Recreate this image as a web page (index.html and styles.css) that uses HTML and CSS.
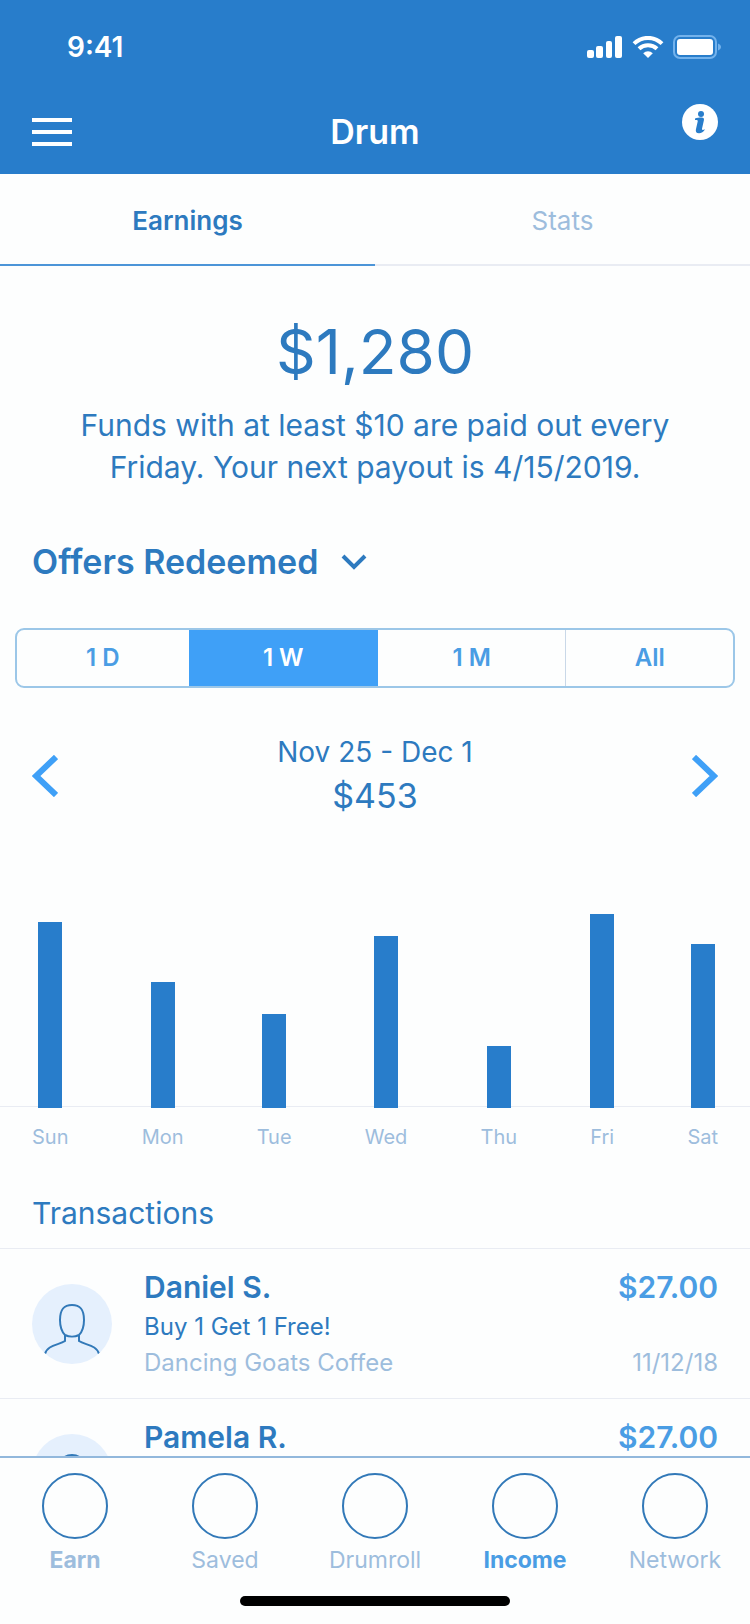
FILE: index.html
```html
<!DOCTYPE html>
<html lang="en">
<head>
<meta charset="utf-8">
<meta name="viewport" content="width=device-width, initial-scale=1">
<title>Drum</title>
<link rel="stylesheet" href="styles.css">
</head>
<body>
<svg class="sprite" aria-hidden="true">
  <symbol id="person" viewBox="0 0 80 80">
    <path d="M33 51C29 47 28 42 28 36C28 25 32 21 40 21C48 21 52 25 52 36C52 42 51 47 47 51C43 53 37 53 33 51ZM33 51V57C27 61 15 61 13 70M47 51V57C53 61 65 61 67 70" fill="none" stroke="currentColor" stroke-width="2"/>
  </symbol>
</svg>
<div class="app">
  <header class="header">
    <div class="status">
      <span class="status-time">9:41</span>
      <div class="status-icons">
        <svg width="36" height="22" viewBox="0 0 36 22" fill="currentColor" aria-hidden="true">
          <rect x="0" y="14" width="7" height="8" rx="2"/>
          <rect x="9" y="10" width="7" height="12" rx="2"/>
          <rect x="19" y="5" width="6" height="17" rx="2"/>
          <rect x="28" y="0" width="7" height="22" rx="2"/>
        </svg>
        <svg width="32" height="22" viewBox="0 0 32 22" aria-hidden="true">
          <path d="M2 7.6A20 20 0 0 1 30 7.6M7 12.8A13 13 0 0 1 25 12.8" fill="none" stroke="currentColor" stroke-width="4"/>
          <path d="M16 22L11.200 17.200A7 7 0 0 1 20.800 17.200Z" fill="currentColor"/>
        </svg>
        <svg width="49" height="24" viewBox="0 0 49 24" aria-hidden="true">
          <rect x="1" y="1" width="42" height="22" rx="6" fill="none" stroke="#73b2ec" stroke-width="2"/>
          <rect x="4" y="4" width="36" height="16" rx="3" fill="currentColor"/>
          <path d="M45 8.500C49 10 49 14 45 15.500Z" fill="#73b2ec"/>
        </svg>
      </div>
    </div>
    <div class="titlebar">
      <button class="icon-button" type="button" aria-label="Menu">
        <svg width="40" height="28" viewBox="0 0 40 28" fill="currentColor" aria-hidden="true"><path d="M0 0H40V4H0ZM0 12H40V16H0ZM0 24H40V28H0Z"/></svg>
      </button>
      <h1 class="title">Drum</h1>
      <button class="icon-button info" type="button" aria-label="Information">
        <svg width="36" height="36" viewBox="0 0 36 36" aria-hidden="true">
          <circle cx="18" cy="18" r="18" fill="currentColor"/>
          <circle cx="19" cy="10" r="3" fill="#287dcb"/>
          <path d="M13 14.500C15 13.800 17 13.500 19.500 13.500C21.800 13.500 22.200 14.600 21.900 16.200L20 24.800C19.800 26.200 20.800 26.200 23 25.200C21.800 28 19.200 29.200 17 29.200C14.200 29.200 13.500 27.600 13.900 25.500L15.700 17.600C15.900 16.300 15.300 15.900 13 16Z" fill="#287dcb"/>
        </svg>
      </button>
    </div>
  </header>

  <nav class="tabs" aria-label="Views">
    <a class="tab tab-active" href="#earnings" aria-current="page">Earnings</a>
    <a class="tab" href="#stats">Stats</a>
  </nav>

  <main class="content" id="earnings">
    <section class="summary">
      <p class="balance">$1,280</p>
      <p class="payout">Funds with at least $10 are paid out every Friday. Your next payout is 4/15/2019.</p>
    </section>

    <div class="metric">
      <select class="metric-select" aria-label="Metric"><option>Offers Redeemed</option></select>
      <svg class="metric-arrow" width="26" height="16" viewBox="0 0 26 16" aria-hidden="true"><path d="M2 2L13 13L24 2" fill="none" stroke="currentColor" stroke-width="4"/></svg>
    </div>

    <div class="ranges" role="group" aria-label="Range">
      <button class="range" type="button">1 D</button>
      <button class="range range-active" type="button" aria-pressed="true">1 W</button>
      <button class="range" type="button">1 M</button>
      <button class="range" type="button">All</button>
    </div>

    <div class="period">
      <button class="icon-button arrow" type="button" aria-label="Previous week">
        <svg width="26" height="42" viewBox="0 0 26 42" aria-hidden="true"><path d="M24 2L4 21L24 40" fill="none" stroke="currentColor" stroke-width="6"/></svg>
      </button>
      <div class="period-text">
        <p class="period-dates">Nov 25 - Dec 1</p>
        <p class="period-total">$453</p>
      </div>
      <button class="icon-button arrow" type="button" aria-label="Next week">
        <svg width="26" height="42" viewBox="0 0 26 42" aria-hidden="true"><path d="M2 2L22 21L2 40" fill="none" stroke="currentColor" stroke-width="6"/></svg>
      </button>
    </div>

    <ul class="chart">
      <li class="day"><span class="bar" style="height:186px"></span><span class="day-name">Sun</span></li>
      <li class="day"><span class="bar" style="height:126px"></span><span class="day-name">Mon</span></li>
      <li class="day"><span class="bar" style="height:94px"></span><span class="day-name">Tue</span></li>
      <li class="day"><span class="bar" style="height:172px"></span><span class="day-name">Wed</span></li>
      <li class="day"><span class="bar" style="height:62px"></span><span class="day-name">Thu</span></li>
      <li class="day"><span class="bar" style="height:194px"></span><span class="day-name">Fri</span></li>
      <li class="day"><span class="bar" style="height:164px"></span><span class="day-name">Sat</span></li>
    </ul>

    <section>
      <h2 class="section-title">Transactions</h2>
      <ul class="transactions">
        <li class="transaction">
          <svg class="avatar" width="80" height="80" aria-hidden="true"><use href="#person"/></svg>
          <div class="details">
            <div class="line line-main"><span>Daniel S.</span><span class="amount">$27.00</span></div>
            <div class="line line-offer">Buy 1 Get 1 Free!</div>
            <div class="line line-muted"><span>Dancing Goats Coffee</span><time datetime="2018-11-12">11/12/18</time></div>
          </div>
        </li>
        <li class="transaction">
          <svg class="avatar" width="80" height="80" aria-hidden="true"><use href="#person"/></svg>
          <div class="details">
            <div class="line line-main"><span>Pamela R.</span><span class="amount">$27.00</span></div>
          </div>
        </li>
      </ul>
    </section>
  </main>

  <footer class="footer">
    <nav class="bottom-nav" aria-label="Main">
      <a class="nav-item nav-strong" href="#earn"><span class="nav-icon"></span>Earn</a>
      <a class="nav-item" href="#saved"><span class="nav-icon"></span>Saved</a>
      <a class="nav-item" href="#drumroll"><span class="nav-icon"></span>Drumroll</a>
      <a class="nav-item nav-strong nav-active" href="#income" aria-current="page"><span class="nav-icon"></span>Income</a>
      <a class="nav-item" href="#network"><span class="nav-icon"></span>Network</a>
    </nav>
    <div class="home-indicator"></div>
  </footer>
</div>
</body>
</html>
```

FILE: styles.css
```css
:root {
  --brand: #287dcb;
  --text: #2d7abf;
  --accent: #4a9de4;
  --selected: #3fa0f7;
  --muted: #9dbddd;
  --line: #e9ecf3;
}

* {
  box-sizing: border-box;
}

body,
h1,
h2,
p,
ul {
  margin: 0;
  padding: 0;
}

ul {
  list-style: none;
}

body {
  background: #fdfefe;
  color: var(--text);
  font-family: Inter, "Liberation Sans", sans-serif;
}

button,
select {
  margin: 0;
  padding: 0;
  border: 0;
  background: none;
  color: inherit;
  font: inherit;
}

a {
  color: inherit;
  text-decoration: none;
}

svg {
  display: block;
}

.sprite {
  display: none;
}

.app {
  display: flex;
  flex-direction: column;
  height: 100vh;
}

.header {
  flex: none;
  padding: 30px 32px 14px;
  background: var(--brand);
  color: #fff;
}

.status {
  display: flex;
  align-items: center;
  justify-content: space-between;
  padding-left: 35px;
}

.status-time {
  font-size: 28px;
  font-weight: 600;
  line-height: 34px;
}

.status-icons {
  display: flex;
  align-items: center;
  gap: 9px;
  margin-right: -4px;
}

.titlebar {
  display: grid;
  grid-template-columns: 1fr auto 1fr;
  align-items: center;
  margin-top: 40px;
}

.title {
  font-size: 34px;
  font-weight: 600;
  line-height: 56px;
}

.icon-button {
  display: block;
  justify-self: start;
}

.info {
  align-self: start;
  justify-self: end;
}

.tabs {
  display: grid;
  flex: none;
  grid-template-columns: 1fr 1fr;
}

.tab {
  padding: 32px 0 28px;
  border-bottom: 2px solid var(--line);
  color: var(--muted);
  font-size: 26px;
  line-height: 30px;
  text-align: center;
}

.tab-active {
  border-color: #4c95d8;
  color: var(--text);
  font-weight: 600;
}

.content {
  flex: 1;
  min-height: 0;
  overflow-y: auto;
  scrollbar-width: none;
}

.summary {
  padding: 48px 72px 0;
  text-align: center;
}

.balance {
  font-size: 62px;
  line-height: 76px;
}

.payout {
  margin-top: 14px;
  font-size: 30px;
  line-height: 42px;
}

.metric {
  display: flex;
  align-items: center;
  margin: 52px 32px 0;
}

.metric-select {
  padding-right: 48px;
  appearance: none;
  font-size: 34px;
  font-weight: 600;
  line-height: 44px;
}

.metric-arrow {
  margin-left: -26px;
  pointer-events: none;
}

.ranges {
  display: grid;
  grid-template-columns: 172fr 190fr 188fr 168fr;
  margin: 44px 15px 0;
  overflow: hidden;
  border: 2px solid #9cc7e8;
  border-radius: 9px;
}

.range {
  color: var(--accent);
  font-size: 24px;
  font-weight: 600;
  line-height: 56px;
}

.range:last-child {
  border-left: 1px solid #c9d8e8;
}

.range-active {
  background: var(--selected);
  color: #fff;
}

.period {
  display: flex;
  align-items: center;
  justify-content: space-between;
  padding: 44px 32px 0;
}

.arrow {
  color: var(--selected);
}

.period-text {
  text-align: center;
}

.period-dates {
  font-size: 28px;
  line-height: 40px;
}

.period-total {
  font-size: 34px;
  line-height: 48px;
}

.chart {
  display: flex;
  align-items: flex-end;
  justify-content: space-between;
  margin-top: 94px;
  padding: 0 32px;
  background: linear-gradient(var(--line), var(--line)) 0 192px / 100% 1px no-repeat;
}

.day {
  display: flex;
  flex-direction: column;
  align-items: center;
  gap: 16px;
}

.bar {
  width: 24px;
  background: var(--brand);
}

.day-name {
  color: var(--muted);
  font-size: 20px;
  line-height: 26px;
}

.section-title {
  margin-top: 44px;
  padding: 0 32px 16px;
  border-bottom: 1px solid var(--line);
  font-size: 30px;
  font-weight: 400;
  line-height: 38px;
}

.transaction {
  display: flex;
  gap: 32px;
  min-height: 150px;
  padding: 20px 32px 0;
  border-bottom: 1px solid var(--line);
}

.avatar {
  flex: none;
  margin-top: 15px;
  border-radius: 50%;
  background: #e5f0fd;
  color: #3279b8;
}

.details {
  flex: 1;
}

.line {
  display: flex;
  justify-content: space-between;
  font-size: 24px;
  line-height: 36px;
}

.line-main {
  font-size: 30px;
  font-weight: 600;
}

.line-offer {
  padding-top: 4px;
}

.line-muted {
  color: var(--muted);
}

.amount {
  color: var(--accent);
}

.footer {
  flex: none;
  padding-bottom: 18px;
  border-top: 2px solid #92b8dc;
  background: #fdfefe;
}

.bottom-nav {
  display: grid;
  grid-template-columns: repeat(5, 1fr);
  padding-top: 15px;
}

.nav-item {
  display: flex;
  flex-direction: column;
  align-items: center;
  gap: 5px;
  color: var(--muted);
  font-size: 23px;
  line-height: 32px;
}

.nav-icon {
  width: 66px;
  height: 66px;
  border: 2px solid #3279b8;
  border-radius: 50%;
}

.nav-strong {
  font-weight: 700;
}

.nav-active {
  color: var(--accent);
}

.home-indicator {
  width: 36%;
  height: 10px;
  margin: 20px auto 0;
  border-radius: 5px;
  background: #000;
}
```
